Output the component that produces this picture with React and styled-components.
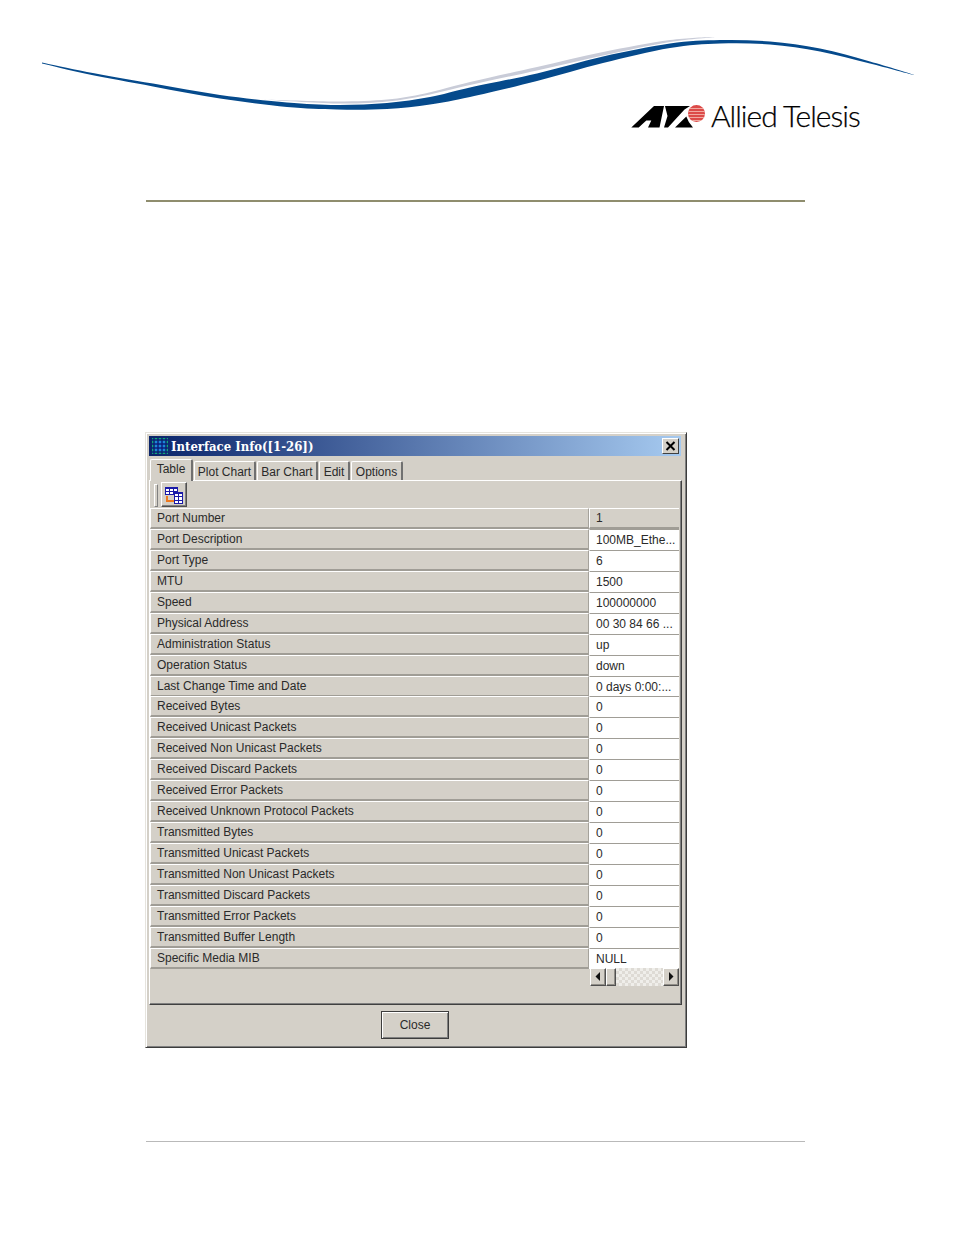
import React from "react";
import styled, { createGlobalStyle } from "styled-components";

const Global = createGlobalStyle`
  html, body { margin: 0; padding: 0; background: #fff; }
  body { font-family: "Liberation Sans", Arial, sans-serif; }
`;

const Page = styled.div`
  width: 954px;
  height: 1235px;
  display: flex;
  flex-direction: column;
  overflow: hidden;
  background: #fff;
`;
const Swoosh = styled.svg`
  display: block;
  width: 954px;
  height: 103px;
  flex: none;
  overflow: visible;
`;
const LogoRow = styled.div`
  display: flex;
  align-items: flex-start;
  height: 27px;
  padding: 2px 0 0 631px;
  box-sizing: border-box;
  gap: 6px;
`;
const LogoMark = styled.svg`
  display: block;
  width: 74px;
  height: 24px;
  flex: none;
`;
const LogoText = styled.span`
  font-family: "Lato", "Liberation Sans", sans-serif;
  font-weight: 300;
  font-size: 30px;
  line-height: 27px;
  letter-spacing: -1px;
  color: #000;
  white-space: nowrap;
  margin-top: -3px;
  -webkit-text-stroke: 0.25px #000;
`;
const TopRule = styled.div`
  height: 2px;
  margin: 70px 149px 0 146px;
  background: #8f8d6e;
  flex: none;
`;
const Dialog = styled.div`
  width: 542px;
  height: 616px;
  margin: 230px 0 0 145px;
  box-sizing: border-box;
  background: #d4d0c8;
  border: 1px solid;
  border-color: #e6e4de #3c3c3c #3c3c3c #e6e4de;
  box-shadow: inset 1px 1px 0 #fff, inset -1px -1px 0 #808080;
  padding: 3px 5px 0 3px;
  display: flex;
  flex-direction: column;
  flex: none;
`;
const TitleBar = styled.div`
  height: 20px;
  flex: none;
  display: flex;
  align-items: center;
  padding: 0 2px 0 2px;
  gap: 2px;
  background: linear-gradient(90deg, #0a246a, #a6caf0);
`;
const TitleIcon = styled.svg`
  width: 18px;
  height: 18px;
  flex: none;
`;
const TitleText = styled.span`
  flex: 1;
  color: #fff;
  font-family: "DejaVu Serif Condensed", "DejaVu Serif", serif;
  font-stretch: condensed;
  font-weight: 700;
  font-size: 13px;
  white-space: nowrap;
`;
const CloseBox = styled.div`
  width: 17px;
  height: 16px;
  box-sizing: border-box;
  background: #d4d0c8;
  border: 1px solid;
  border-color: #fff #404040 #404040 #fff;
  display: flex;
  align-items: center;
  justify-content: center;
`;
const TabBar = styled.div`
  height: 24px;
  flex: none;
  display: flex;
  align-items: flex-end;
  padding-left: 1px;
  position: relative;
`;
const Tab = styled.div`
  box-sizing: border-box;
  height: ${(p) => (p.$active ? 22 : 19)}px;
  width: ${(p) => p.$w}px;
  margin-right: 1px;
  margin-bottom: ${(p) => (p.$active ? -1 : 0)}px;
  border: 1px solid;
  border-color: #fff #404040 transparent #fff;
  border-radius: 2px 2px 0 0;
  border-bottom: 0;
  border-right-width: 2px;
  border-right-color: #707070;
  font-size: 12px;
  color: #2a2a2a;
  text-align: center;
  line-height: ${(p) => (p.$active ? 19 : 20)}px;
  background: #d4d0c8;
  z-index: ${(p) => (p.$active ? 2 : 0)};
  position: relative;
`;
const Panel = styled.div`
  width: 533px;
  height: 525px;
  box-sizing: border-box;
  flex: none;
  border: 1px solid;
  border-color: #fff #404040 #404040 #fff;
  box-shadow: inset -1px -1px 0 #808080;
  padding: 1px 2px 0 0;
  display: flex;
  flex-direction: column;
`;
const Toolbar = styled.div`
  height: 26px;
  flex: none;
  display: flex;
  align-items: flex-start;
  padding-left: 4px;
  gap: 3px;
`;
const Grip = styled.div`
  width: 2px;
  height: 21px;
  margin-top: 2px;
  border: 1px solid;
  border-color: #fff #808080 #808080 #fff;
`;
const ToolButton = styled.div`
  width: 26px;
  height: 25px;
  box-sizing: border-box;
  border: 1px solid;
  border-color: #fff #505050 #505050 #fff;
  box-shadow: inset -1px -1px 0 #808080;
  display: flex;
  align-items: center;
  justify-content: center;
`;
const Rows = styled.div`
  display: flex;
  flex-direction: column;
  flex: none;
`;
const Row = styled.div`
  display: grid;
  grid-template-columns: 439px 90px;
  height: 20.95px;
  font-size: 12px;
  color: #2a2a2a;
`;
const LabelCell = styled.div`
  box-sizing: border-box;
  border-top: 1px solid #fff;
  border-left: 1px solid #fff;
  border-right: 1px solid #a5a29b;
  border-bottom: 2px solid #a09d96;
  padding-left: 6px;
  line-height: 18px;
  white-space: nowrap;
`;
const ValueCell = styled.div`
  box-sizing: border-box;
  padding-left: 6px;
  white-space: nowrap;
  overflow: hidden;
  line-height: ${(p) => (p.$head ? 18 : 20)}px;
  background: ${(p) => (p.$head ? "#d4d0c8" : "#fff")};
  border-top: 1px solid ${(p) => (p.$head ? "#fff" : "#a09d96")};
  border-left: 1px solid #fff;
  border-bottom: ${(p) => (p.$head ? "2px solid #a09d96" : "0")};
`;
const ScrollRow = styled.div`
  display: flex;
  height: 18px;
  margin: -1px 0 0 440px;
  width: 89px;
`;
const ScrollButton = styled.div`
  width: 16px;
  height: 18px;
  box-sizing: border-box;
  border: 1px solid;
  border-color: #fff #505050 #505050 #fff;
  box-shadow: inset -1px -1px 0 #908d87;
  background: #d4d0c8;
  display: flex;
  align-items: center;
  justify-content: center;
  flex: none;
`;
const ScrollThumb = styled(ScrollButton)`
  width: 10px;
`;
const ScrollTrack = styled.div`
  flex: 1;
  background: repeating-conic-gradient(#dedbd5 0 25%, #efeeea 0 50%) 0 0 / 6px 6px;
`;
const Footer = styled.div`
  flex: 1;
  display: flex;
  justify-content: center;
  padding: 6px 0 0 0;
  align-items: flex-start;
`;
const CloseButton = styled.div`
  width: 68px;
  height: 28px;
  box-sizing: border-box;
  border: 1px solid #3c3c3c;
  box-shadow: inset 1px 1px 0 #fff, inset -1px -1px 0 #808080;
  font-size: 12px;
  color: #2a2a2a;
  text-align: center;
  line-height: 27px;
`;
const BottomRule = styled.div`
  height: 1px;
  margin: 93px 149px 0 146px;
  background: #b9b9b9;
  flex: none;
`;

function smooth(pts) {
  let d = `M${pts[0][0]},${pts[0][1]}`;
  for (let i = 0; i < pts.length - 1; i++) {
    const p0 = pts[i - 1] || pts[i];
    const p1 = pts[i];
    const p2 = pts[i + 1];
    const p3 = pts[i + 2] || p2;
    const c1 = [p1[0] + (p2[0] - p0[0]) / 6, p1[1] + (p2[1] - p0[1]) / 6];
    const c2 = [p2[0] - (p3[0] - p1[0]) / 6, p2[1] - (p3[1] - p1[1]) / 6];
    d += `C${c1[0]},${c1[1]} ${c2[0]},${c2[1]} ${p2[0]},${p2[1]}`;
  }
  return d;
}

const blue = [
  [42, 62.6], [87, 72], [153, 83.6], [220, 95], [287, 102.5], [337, 105], [387, 103], [430, 97], [470, 87.5],
  [537, 73.5], [603, 56.5], [670, 43.5], [720, 40], [770, 41.5], [820, 48.5], [870, 61.5], [914, 75],
  [870, 63.5], [820, 51.5], [770, 44.5], [720, 43.5], [670, 48], [603, 63], [537, 81], [470, 97], [430, 104.5], [387, 109],
  [337, 109.5], [287, 107], [220, 98.5], [153, 86.4], [87, 74], [42, 63.6],
];
const grey = [
  [262, 99.5], [337, 101.5], [387, 99.5], [425, 93.5], [470, 82], [537, 67], [603, 52], [670, 40], [715, 37],
  [670, 42], [603, 55.5], [537, 70.5], [470, 85], [425, 95.5], [387, 101.5], [337, 103.5], [262, 99.5],
];

const rows = [
  ["Port Number", "1"],
  ["Port Description", "100MB_Ethe..."],
  ["Port Type", "6"],
  ["MTU", "1500"],
  ["Speed", "100000000"],
  ["Physical Address", "00 30 84 66 ..."],
  ["Administration Status", "up"],
  ["Operation Status", "down"],
  ["Last Change Time and Date", "0 days 0:00:..."],
  ["Received Bytes", "0"],
  ["Received Unicast Packets", "0"],
  ["Received Non Unicast Packets", "0"],
  ["Received Discard Packets", "0"],
  ["Received Error Packets", "0"],
  ["Received Unknown Protocol Packets", "0"],
  ["Transmitted Bytes", "0"],
  ["Transmitted Unicast Packets", "0"],
  ["Transmitted Non Unicast Packets", "0"],
  ["Transmitted Discard Packets", "0"],
  ["Transmitted Error Packets", "0"],
  ["Transmitted Buffer Length", "0"],
  ["Specific Media MIB", "NULL"],
];

const tabs = [
  ["Table", 43, true],
  ["Plot Chart", 62],
  ["Bar Chart", 61],
  ["Edit", 31],
  ["Options", 52],
];

function GridIcon() {
  const lines = [];
  for (let i = 0; i <= 3; i++) {
    lines.push(<path key={"h" + i} d={`M1 ${3 + i * 4}H17`} stroke="#0c1a78" strokeWidth="1.4" />);
    lines.push(<path key={"v" + i} d={`M${3 + i * 4} 1V17`} stroke="#0c1a78" strokeWidth="1.4" />);
  }
  return (
    <TitleIcon viewBox="0 0 18 18">
      <rect x="1" y="1" width="16" height="16" fill="#12a878" />
      <rect x="4" y="4" width="10" height="10" fill="#1c86d8" />
      {lines}
    </TitleIcon>
  );
}

function TableIcon() {
  return (
    <svg width="20" height="18" viewBox="0 0 20 18" shapeRendering="crispEdges">
      <g fill="#fff" stroke="#1a1aa8" strokeWidth="1">
        <path d="M1.5 1.5H13.5V8.5H1.5Z" />
        <path d="M10.5 6.5H18.5V17.5H10.5Z" />
      </g>
      <path d="M1 5.5H14M5.5 1V9M9.5 1V9M10 10.5H19M10 14.5H19M14.5 6V17.5" stroke="#1a1aa8" />
      <path d="M1 0.5H14V2.5H1ZM10 6H19V8H10Z" fill="#1a1aa8" />
      <path d="M3 10V15H9" stroke="#ee7a20" strokeWidth="1.5" fill="none" />
      <rect x="7" y="14" width="3" height="2" fill="#ee7a20" />
    </svg>
  );
}

export default function App() {
  return (
    <Page>
      <Global />
      <Swoosh viewBox="0 0 954 103">
        <path d={smooth(grey)} fill="#c9ccd8" />
        <path d={smooth(blue)} fill="#054a8c" />
      </Swoosh>
      <LogoRow>
        <LogoMark viewBox="0 0 74 24">
          <defs>
            <clipPath id="disc">
              <circle cx="65.5" cy="8.6" r="8.5" />
            </clipPath>
          </defs>
          <path d="M0.3 22.4 L23 1 H33 L28.5 22.4 H17 L20.3 15.5 H15.3 L7.7 22.4 Z" fill="#000" />
          <path d="M34 1 H59 L53.5 4.5 L47.5 11 L37 22.4 H33 L36.5 11 Z" fill="#000" />
          <path d="M44 22.4 L55.3 11.5 Q57 17 62 22.4 Z" fill="#000" />
          <g clipPath="url(#disc)">
            <rect x="56" y="0" width="18" height="18" fill="#dc4a48" />
            {[3, 6, 9, 12, 15].map((y) => (
              <rect key={y} x="56" y={y} width="18" height="1" fill="#f0a8a0" />
            ))}
          </g>
        </LogoMark>
        <LogoText>Allied Telesis</LogoText>
      </LogoRow>
      <TopRule />
      <Dialog>
        <TitleBar>
          <GridIcon />
          <TitleText>Interface Info([1-26])</TitleText>
          <CloseBox>
            <svg width="11" height="10" viewBox="0 0 11 10">
              <path d="M1.5 1L9.5 9M9.5 1L1.5 9" stroke="#000" strokeWidth="2" />
            </svg>
          </CloseBox>
        </TitleBar>
        <TabBar>
          {tabs.map(([t, w, a]) => (
            <Tab key={t} $w={w} $active={a}>{t}</Tab>
          ))}
        </TabBar>
        <Panel>
          <Toolbar>
            <Grip />
            <ToolButton><TableIcon /></ToolButton>
          </Toolbar>
          <Rows>
            {rows.map(([k, v], i) => (
              <Row key={k}>
                <LabelCell>{k}</LabelCell>
                <ValueCell $head={i === 0}>{v}</ValueCell>
              </Row>
            ))}
          </Rows>
          <ScrollRow>
            <ScrollButton>
              <svg width="6" height="9" viewBox="0 0 6 9"><path d="M5 0V9L0.5 4.5Z" fill="#111" /></svg>
            </ScrollButton>
            <ScrollThumb />
            <ScrollTrack />
            <ScrollButton>
              <svg width="6" height="9" viewBox="0 0 6 9"><path d="M1 0V9L5.5 4.5Z" fill="#111" /></svg>
            </ScrollButton>
          </ScrollRow>
        </Panel>
        <Footer>
          <CloseButton>Close</CloseButton>
        </Footer>
      </Dialog>
      <BottomRule />
    </Page>
  );
}
